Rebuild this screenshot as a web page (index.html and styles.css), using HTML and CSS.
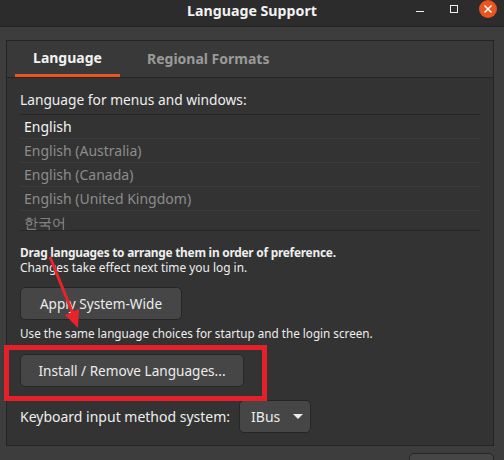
FILE: index.html
```html
<!DOCTYPE html>
<html lang="en">
<head>
    <meta charset="UTF-8">
    <title>Language Support</title>
    <link rel="stylesheet" href="styles.css">
</head>
<body>
    <div class="titlebar">
        <div></div>
        <div class="title">Language Support</div>
        <div class="controls">
            <span class="ctl-min"></span>
            <span class="ctl-max"></span>
            <span class="ctl-close">
                <svg width="10" height="10" viewBox="0 0 10 10"><path d="M1.5 1.5 L8.5 8.5 M8.5 1.5 L1.5 8.5" stroke="#fff" stroke-width="1.5"/></svg>
            </span>
        </div>
    </div>

    <div class="notebook">
        <div class="tabs">
            <div class="tab active">Language</div>
            <div class="tab">Regional Formats</div>
        </div>
        <div class="page">
            <div class="label">Language for menus and windows:</div>
            <div class="list">
                <div class="row first">English</div>
                <div class="row">English (Australia)</div>
                <div class="row">English (Canada)</div>
                <div class="row">English (United Kingdom)</div>
                <div class="row">한국어</div>
            </div>
            <div class="hint">
                <b>Drag languages to arrange them in order of preference.</b><br>
                Changes take effect next time you log in.
            </div>
            <button class="btn btn-apply">Apply System-Wide</button>
            <div class="hint hint-use">Use the same language choices for startup and the login screen.</div>
            <button class="btn btn-install">Install / Remove Languages...</button>
            <div class="kbd-row">
                <span class="kbd-label">Keyboard input method system:</span>
                <button class="btn combo">IBus <span class="caret"></span></button>
            </div>
        </div>
    </div>

    <!-- dialog action area, only the top edge of its button is in view -->
    <div class="actions">
        <button class="btn btn-close"></button>
    </div>

    <!-- annotations drawn over the screenshot -->
    <div class="mark-box"></div>
    <svg class="mark-arrow" width="504" height="460" viewBox="0 0 504 460">
        <line x1="50" y1="257" x2="73" y2="314" stroke="#e8232a" stroke-width="3"/>
        <polygon points="78,328 79,309 65,315" fill="#e8232a"/>
    </svg>
</body>
</html>
```

FILE: styles.css
```css
html {
    overflow: hidden;
}
body {
    margin: 0;
    width: 504px;
    height: 460px;
    overflow: hidden;
    background: #3d3d3d;
    font-family: 'Noto Sans', 'DejaVu Sans', sans-serif;
    color: #eeeeee;
    position: relative;
}
.titlebar {
    height: 27px;
    box-sizing: border-box;
    background: #2c2c2c;
    border-bottom: 1px solid #1f1f1f;
    display: grid;
    grid-template-columns: 1fr auto 1fr;
}
.title {
    font-weight: bold;
    font-size: 14.2px;
    line-height: 22px;
    color: #f2f2f2;
}
.controls {
    display: flex;
    justify-content: flex-end;
    align-items: flex-start;
}
.ctl-min {
    width: 8px;
    height: 1px;
    background: #f0f0f0;
    margin-top: 11px;
}
.ctl-max {
    width: 8px;
    height: 8px;
    box-sizing: border-box;
    border: 1px solid #f0f0f0;
    margin-top: 5px;
    margin-left: 26px;
}
.ctl-close {
    width: 18px;
    height: 18px;
    border-radius: 50%;
    background: #e95420;
    margin-left: 21px;
    margin-right: 7px;
    display: flex;
    align-items: center;
    justify-content: center;
}
.notebook {
    margin: 13px 10px 0 6px;
    border: 1px solid #242424;
    background: #333333;
}
.tabs {
    height: 36px;
    background: #393939;
    border-bottom: 1px solid #242424;
    display: flex;
    gap: 9px;
    padding-left: 8px;
}
.tab {
    padding: 0 18px;
    font-weight: bold;
    font-size: 14px;
    line-height: 36px;
    color: #9a9a9a;
    box-sizing: border-box;
}
.tab.active {
    color: #f2f2f2;
    border-bottom: 3px solid #e95420;
    line-height: 33px;
    width: 105px;
    text-align: center;
}
.page {
    padding: 12px 13px 12px 13px;
}
.label {
    font-size: 13.75px;
    line-height: 20px;
}
.list {
    margin-top: 4px;
    height: 117px;
    box-sizing: border-box;
    border-top: 1px solid #262626;
    border-bottom: 1px solid #262626;
    overflow: hidden;
}
.row {
    height: 24px;
    box-sizing: border-box;
    border-bottom: 1px solid #3b3b3b;
    padding-left: 4px;
    font-size: 14px;
    line-height: 23px;
    color: #8c8c8c;
}
.row.first {
    color: #f4f4f4;
}
.hint {
    margin-top: 14px;
    font-size: 11.9px;
    line-height: 15px;
    white-space: nowrap;
}
.hint b {
    font-weight: bold;
    letter-spacing: -0.25px;
}
.hint-use {
    margin-top: 6px;
    font-size: 11.7px;
}
.btn {
    display: block;
    height: 33px;
    box-sizing: border-box;
    background: #464646;
    border: 1px solid #262626;
    border-radius: 5px;
    color: #ececec;
    font-family: inherit;
    font-size: 13.6px;
    padding: 0 8px;
    white-space: nowrap;
}
.btn-apply {
    margin-top: 12px;
    width: 162px;
}
.btn-install {
    margin-top: 13px;
    width: 224px;
}
.kbd-row {
    margin-top: 13px;
    display: flex;
    align-items: center;
    gap: 9px;
}
.kbd-label {
    font-size: 14px;
}
.combo {
    width: 72px;
    padding: 0 11px;
    font-size: 14px;
    display: flex;
    align-items: center;
    gap: 13px;
}
.caret {
    width: 0;
    height: 0;
    border-left: 5px solid transparent;
    border-right: 5px solid transparent;
    border-top: 5px solid #ececec;
}
.actions {
    height: 7px;
    overflow: hidden;
    display: flex;
    justify-content: flex-end;
    align-items: flex-start;
    padding: 7px 10px 0 0;
}
.btn-close {
    width: 85px;
}
.mark-box {
    position: absolute;
    left: 4px;
    top: 345px;
    width: 263px;
    height: 56px;
    box-sizing: border-box;
    border: 5px solid #e4202a;
}
.mark-arrow {
    position: absolute;
    left: 0;
    top: 0;
}
```
